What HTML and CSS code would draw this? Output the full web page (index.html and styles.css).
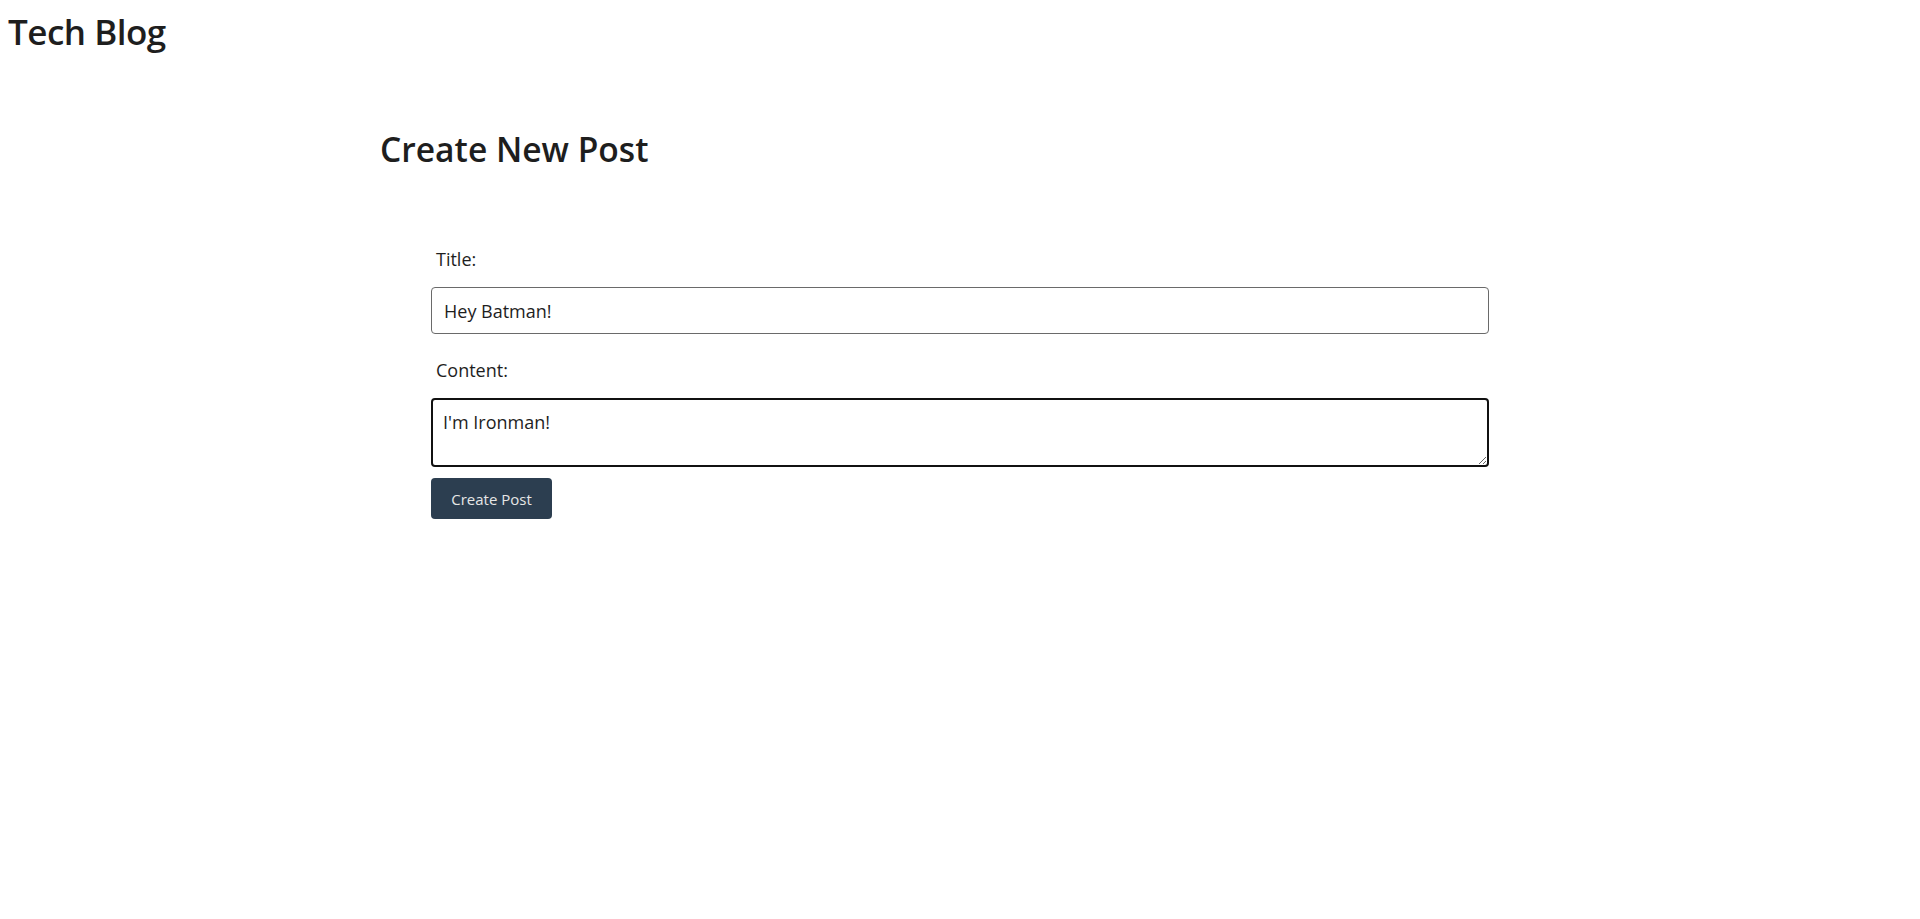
FILE: index.html
```html
<!DOCTYPE html>
<html lang="en">
<head>
<meta charset="utf-8">
<title>Tech Blog</title>
<link rel="stylesheet" href="styles.css">
</head>
<body>
<header class="site-header">
  <h1 class="site-title">Tech Blog</h1>
</header>
<main class="container">
  <h2 class="page-title">Create New Post</h2>
  <form class="post-form">
    <label class="field-label" for="title">Title:</label>
    <input class="field-input" id="title" type="text" value="Hey Batman!">
    <label class="field-label" for="content">Content:</label>
    <textarea class="field-textarea" id="content">I'm Ironman!</textarea>
    <div class="actions">
      <button class="btn-primary" type="button">Create Post</button>
    </div>
  </form>
</main>
</body>
</html>
```

FILE: styles.css
```css
* {
  box-sizing: border-box;
}

html, body {
  margin: 0;
  padding: 0;
  background: #ffffff;
}

body {
  font-family: "Segoe UI", "Open Sans", "Noto Sans", sans-serif;
  color: #1e1e1e;
}

.site-header {
  padding: 10px 8px 0;
}

.site-title {
  margin: 0;
  font-size: 35px;
  line-height: 44px;
  font-weight: 600;
  letter-spacing: -0.5px;
}

.container {
  max-width: 1200px;
  margin: 0 auto;
  padding: 0 20px;
}

.page-title {
  margin: 75px 0 0;
  font-size: 33.6px;
  line-height: 40px;
  font-weight: 600;
  letter-spacing: 0;
}

.post-form {
  margin: 78px 51px 0;
  display: flex;
  flex-direction: column;
}

.field-label {
  display: block;
  padding-left: 5px;
  font-size: 18px;
  line-height: 24px;
  margin-bottom: 16px;
}

.field-input {
  display: block;
  width: 100%;
  height: 47px;
  padding: 0 12px;
  border: 1px solid #6a6a6a;
  border-radius: 4px;
  font-family: inherit;
  font-size: 18px;
  color: #1e1e1e;
  margin-bottom: 24px;
  outline: none;
}

.field-textarea {
  display: block;
  width: 100%;
  height: 69px;
  padding: 10px 10px;
  border: 2px solid #111111;
  border-radius: 4px;
  font-family: inherit;
  font-size: 18px;
  line-height: 24px;
  color: #1e1e1e;
  outline: none;
  margin-bottom: 11px;
}

.actions {
  display: flex;
}

.btn-primary {
  width: 121px;
  height: 41px;
  border: none;
  border-radius: 4px;
  background: #2c3e50;
  color: #e6e6e6;
  font-family: inherit;
  font-size: 15px;
  cursor: pointer;
}
```
